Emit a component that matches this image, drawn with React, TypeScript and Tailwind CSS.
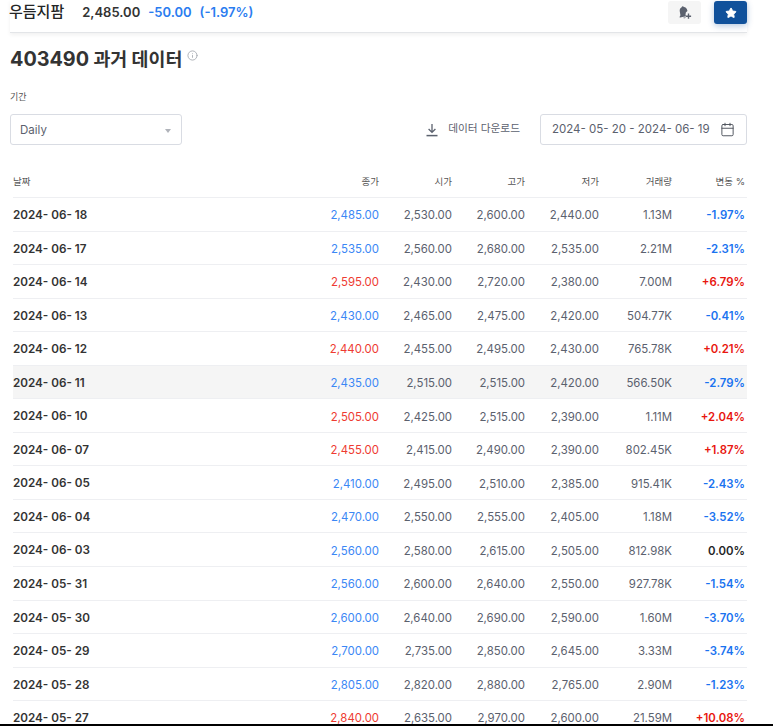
import { Star, Info, Calendar } from 'lucide-react';

type Row = {
  date: string;
  close: string;
  open: string;
  high: string;
  low: string;
  vol: string;
  change: string;
  up: boolean;
};

const rows: Row[] = [
  { date: '2024- 06- 18', close: '2,485.00', open: '2,530.00', high: '2,600.00', low: '2,440.00', vol: '1.13M', change: '-1.97%', up: false },
  { date: '2024- 06- 17', close: '2,535.00', open: '2,560.00', high: '2,680.00', low: '2,535.00', vol: '2.21M', change: '-2.31%', up: false },
  { date: '2024- 06- 14', close: '2,595.00', open: '2,430.00', high: '2,720.00', low: '2,380.00', vol: '7.00M', change: '+6.79%', up: true },
  { date: '2024- 06- 13', close: '2,430.00', open: '2,465.00', high: '2,475.00', low: '2,420.00', vol: '504.77K', change: '-0.41%', up: false },
  { date: '2024- 06- 12', close: '2,440.00', open: '2,455.00', high: '2,495.00', low: '2,430.00', vol: '765.78K', change: '+0.21%', up: true },
  { date: '2024- 06- 11', close: '2,435.00', open: '2,515.00', high: '2,515.00', low: '2,420.00', vol: '566.50K', change: '-2.79%', up: false },
  { date: '2024- 06- 10', close: '2,505.00', open: '2,425.00', high: '2,515.00', low: '2,390.00', vol: '1.11M', change: '+2.04%', up: true },
  { date: '2024- 06- 07', close: '2,455.00', open: '2,415.00', high: '2,490.00', low: '2,390.00', vol: '802.45K', change: '+1.87%', up: true },
  { date: '2024- 06- 05', close: '2,410.00', open: '2,495.00', high: '2,510.00', low: '2,385.00', vol: '915.41K', change: '-2.43%', up: false },
  { date: '2024- 06- 04', close: '2,470.00', open: '2,550.00', high: '2,555.00', low: '2,405.00', vol: '1.18M', change: '-3.52%', up: false },
  { date: '2024- 06- 03', close: '2,560.00', open: '2,580.00', high: '2,615.00', low: '2,505.00', vol: '812.98K', change: '0.00%', up: false },
  { date: '2024- 05- 31', close: '2,560.00', open: '2,600.00', high: '2,640.00', low: '2,550.00', vol: '927.78K', change: '-1.54%', up: false },
  { date: '2024- 05- 30', close: '2,600.00', open: '2,640.00', high: '2,690.00', low: '2,590.00', vol: '1.60M', change: '-3.70%', up: false },
  { date: '2024- 05- 29', close: '2,700.00', open: '2,735.00', high: '2,850.00', low: '2,645.00', vol: '3.33M', change: '-3.74%', up: false },
  { date: '2024- 05- 28', close: '2,805.00', open: '2,820.00', high: '2,880.00', low: '2,765.00', vol: '2.90M', change: '-1.23%', up: false },
  { date: '2024- 05- 27', close: '2,840.00', open: '2,635.00', high: '2,970.00', low: '2,600.00', vol: '21.59M', change: '+10.08%', up: true },
];

const cols = 'grid grid-cols-[293px_73px_73px_73px_74px_73px_75px]';

function changeColor(r: Row) {
  if (r.change === '0.00%') return 'text-[#232526]';
  return r.up ? 'text-[#e8160f]' : 'text-[#1a73f0]';
}

function BellPlus() {
  return (
    <svg width="16" height="16" viewBox="0 0 16 16" fill="none">
      <g transform="rotate(-10 6 7)">
        <path
          d="M6.6 1.2c.6 0 1 .4 1.1 1 1.7.4 2.8 1.9 2.8 3.6v1.1A3.6 3.6 0 0 0 8 10.2c0 .6.1 1.1.3 1.6H2.2c-.4 0-.6-.5-.3-.8l1-1.2V5.8c0-1.7 1.1-3.2 2.6-3.6.1-.6.5-1 1.1-1z"
          fill="#5b616e"
        />
        <path d="M5.2 12.6h2.6a1.4 1.4 0 0 1-2.6 0z" fill="#5b616e" />
      </g>
      <path d="M11.5 8.6v5.2M8.9 11.2h5.2" stroke="#5b616e" strokeWidth="1.4" />
    </svg>
  );
}

function DownloadIcon() {
  return (
    <svg width="14" height="14" viewBox="0 0 14 14" fill="none" stroke="#5b616e" strokeWidth="1.3">
      <path d="M7 1v8.2M3.6 6l3.4 3.4L10.4 6" />
      <path d="M1.5 12.6h11" strokeWidth="1.5" />
    </svg>
  );
}

export default function App() {
  return (
    <div className="h-[726px] w-[773px] flex flex-col overflow-hidden bg-white text-[#333] font-['Inter','Noto_Sans_CJK_KR',sans-serif]">
      <div className="flex-1 overflow-hidden">
        {/* sticky header */}
        <div className="ml-[10px] mr-[26px] h-[33px] flex items-start justify-between border-b border-[#e3e5e8] shadow-[0_2px_4px_rgba(0,0,0,0.06)]">
          <div className="flex items-center h-[25px]">
            <span className="-ml-px text-[15px] font-medium text-[#232526]">우듬지팜</span>
            <span className="ml-[18px] text-[13px] font-semibold text-[#333]">2,485.00</span>
            <span className="ml-[8px] text-[13px] font-semibold text-[#2a7cf0]">-50.00</span>
            <span className="ml-[8px] text-[13px] font-semibold text-[#2a7cf0]">(-1.97%)</span>
          </div>
          <div className="flex items-start">
            <button className="mt-px w-[33px] h-[23px] rounded-[3px] bg-[#f5f5f5] flex items-center justify-center">
              <BellPlus />
            </button>
            <button className="ml-[13px] mt-px w-[33px] h-[23px] rounded-[3px] bg-[#10519b] shadow-[0_2px_6px_rgba(16,81,155,0.3)] flex items-center justify-center">
              <Star size={12} className="fill-white text-white" />
            </button>
          </div>
        </div>

        {/* title */}
        <div className="ml-[10px] mt-[11px] flex items-start h-[29px]">
          <h1 className="text-[18.4px] leading-[30px] font-bold text-[#333]">
            <span className="text-[19.8px]">403490</span> 과거 데이터
          </h1>
          <Info size={11} className="ml-[5px] mt-[6px] text-[#aaaeb5]" />
        </div>

        {/* filters */}
        <div className="ml-[10px] mt-[17px] text-[9px] leading-[14px] text-[#555]">기간</div>
        <div className="ml-[10px] mr-[26px] mt-[10px] flex items-center justify-between">
          <div className="w-[172px] h-[31px] rounded-[3px] border border-[#d9dce3] flex items-center justify-between pl-[9px] pr-[10px] pt-[2px] text-[11.5px] text-[#5b616e]">
            <span>Daily</span>
            <span className="w-0 h-0 border-x-[3px] border-x-transparent border-t-[4px] border-t-[#b0b3ba]" />
          </div>
          <div className="flex items-center">
            <DownloadIcon />
            <span className="ml-[9px] text-[10.7px] text-[#5b616e]">데이터 다운로드</span>
            <div className="ml-[20px] w-[207px] h-[31px] rounded-[3px] border border-[#d9dce3] flex items-center justify-between pl-[11px] pr-[11px] text-[11.5px] text-[#5b616e]">
              <span>2024- 05- 20 - 2024- 06- 19</span>
              <Calendar size={15} strokeWidth={1.5} className="text-[#4a4f59]" />
            </div>
          </div>
        </div>

        {/* table */}
        <div className="ml-[13px] w-[734px] mt-[20px]">
          <div className={`${cols} w-[734px] h-[33px] items-center border-b border-[#eeeff2] text-[9.5px] text-[#555] pt-[2px]`}>
            <div>날짜</div>
            <div className="text-right">종가</div>
            <div className="text-right">시가</div>
            <div className="text-right">고가</div>
            <div className="text-right">저가</div>
            <div className="text-right">거래량</div>
            <div className="text-right pr-[2px]">변동 %</div>
          </div>
          {rows.map((r) => (
            <div
              key={r.date}
              className={`${cols} w-[734px] h-[33.55px] items-center border-b border-[#eeeff2] pt-[3px] text-[11.4px] text-[#5b616e] ${r.date === '2024- 06- 11' ? 'bg-[#f5f5f5]' : ''}`}
            >
              <div className="text-[11.7px] font-semibold text-[#333]">{r.date}</div>
              <div className={`text-right ${r.up ? 'text-[#ee3b32]' : 'text-[#3b87f5]'}`}>{r.close}</div>
              <div className="text-right">{r.open}</div>
              <div className="text-right">{r.high}</div>
              <div className="text-right">{r.low}</div>
              <div className="text-right">{r.vol}</div>
              <div className={`text-right pr-[2px] font-semibold ${changeColor(r)}`}>{r.change}</div>
            </div>
          ))}
        </div>
      </div>
      <div className="h-[2px] shrink-0 bg-black" />
    </div>
  );
}
